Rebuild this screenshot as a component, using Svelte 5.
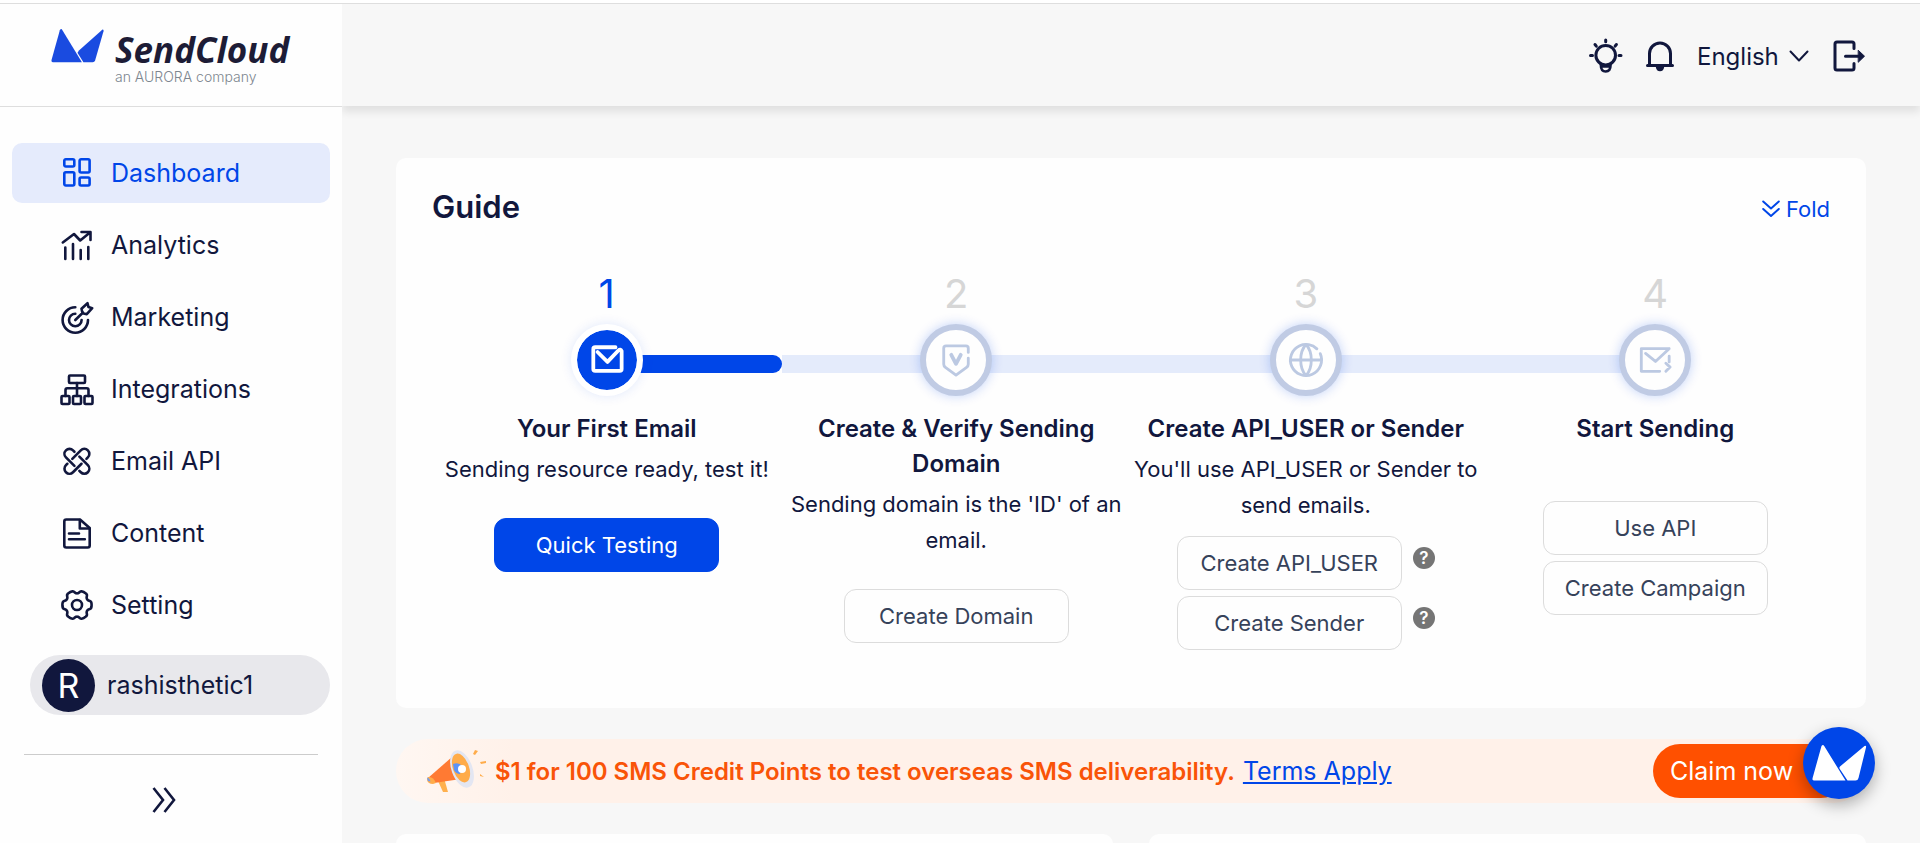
<script>
  const menu = [
    { name: "Dashboard", icon: "dashboard" },
    { name: "Analytics", icon: "analytics" },
    { name: "Marketing", icon: "marketing" },
    { name: "Integrations", icon: "integrations" },
    { name: "Email API", icon: "api" },
    { name: "Content", icon: "content" },
    { name: "Setting", icon: "setting" },
  ];

  const steps = [
    {
      title: "Your First Email",
      text: "Sending resource ready, test it!",
      icon: "mail",
      actions: [{ label: "Quick Testing", primary: true }],
    },
    {
      title: "Create & Verify Sending Domain",
      text: "Sending domain is the 'ID' of an email.",
      icon: "shield",
      actions: [{ label: "Create Domain" }],
    },
    {
      title: "Create API_USER or Sender",
      text: "You'll use API_USER or Sender to send emails.",
      icon: "globe",
      actions: [
        { label: "Create API_USER", help: true },
        { label: "Create Sender", help: true },
      ],
    },
    {
      title: "Start Sending",
      text: "",
      icon: "send",
      actions: [{ label: "Use API" }, { label: "Create Campaign" }],
    },
  ];

  let active = $state("Dashboard");
  let folded = $state(false);

  // six soft teeth around the centre of a 32px box
  function gear() {
    const points = [];
    for (let i = 0; i < 120; i++) {
      const a = (i / 120) * Math.PI * 2;
      const wave = Math.tanh(2 * Math.cos(6 * a) + 0.8);
      const r = 13 + 1.6 * wave;
      points.push(
        `${(16 + r * Math.cos(a)).toFixed(2)} ${(16 + r * Math.sin(a)).toFixed(2)}`
      );
    }
    return `M${points.join("L")}Z`;
  }
</script>

<div class="page">
  <aside class="sidebar">
    <a class="logo" href="#home" aria-label="SendCloud">
      <svg class="mark" viewBox="0 0 54 36" aria-hidden="true">
        <path d="M11 1 31.5 34.5H2Q0 34.5.6 32L9 2Q10 0 11 1Z" />
        <path d="M52.5 1.2Q54 1 53.5 3L45 32.5Q44.4 34.5 42.5 34.5H33L27 25 28.500 22.500Z" />
      </svg>
      <span class="wordmark">
        <span class="brand">SendCloud</span>
        <span class="company">an AURORA company</span>
      </span>
    </a>

    <nav>
      {#each menu as item}
        <a
          href="#{item.icon}"
          class="item"
          class:active={active === item.name}
          onclick={() => (active = item.name)}
        >
          <svg class="icon" viewBox="0 0 32 32" aria-hidden="true">
            {#if item.icon === "dashboard"}
              <rect x="3.3" y="2.3" width="10" height="7.2" rx="1.5" />
              <rect x="18.6" y="2.3" width="10" height="13.2" rx="1.5" />
              <rect x="3.3" y="15.3" width="10" height="13.2" rx="1.5" />
              <rect x="18.6" y="20.5" width="10" height="8" rx="1.5" />
            {:else if item.icon === "analytics"}
              <path d="M1.8 13.500 13 5l6.200 6.500L29 3.500M20.500 3h9v8" />
              <path d="M4.300 18.500V30M12 15v15M19.700 21v9M27.300 18v12" />
            {:else if item.icon === "marketing"}
              <path d="M14.300 6.300A12.700 12.700 0 1 0 27 19" />
              <path d="M14.300 12.700A6.300 6.300 0 1 0 20.600 19" />
              <path d="M14.300 19 22 11.500M20.500 7.800l6-5.600 1 3.900 3.700 1.100-5.400 6-4.300-1Z" />
            {:else if item.icon === "integrations"}
              <rect x="8" y="2.5" width="16" height="7.5" rx="1" />
              <rect x="0.5" y="23" width="8" height="8" rx="1" />
              <rect x="12" y="23" width="8" height="8" rx="1" />
              <rect x="23.5" y="23" width="8" height="8" rx="1" />
              <path d="M16 10v13M4.500 23v-6q0-1.700 1.700-1.700h19.600q1.700 0 1.700 1.700v6" />
            {:else if item.icon === "api"}
              <g transform="translate(15.900 16.300)">
                {#each [-45, 45, 135, 225] as angle}
                  <path d="M-1.500-5H10.500a5 5 0 0 1 0 10H8.500" transform="rotate({angle})" />
                {/each}
              </g>
            {:else if item.icon === "content"}
              <path d="M5.300 2.500H19L28.700 11v17.500q0 2-2 2H5.300q-2 0-2-2v-24q0-2 2-2Z" />
              <path d="M18.800 3v8.500h9.700M8 16.500h10M8 22.300h15.800" />
            {:else}
              <path d={gear()} />
              <circle cx="16" cy="16" r="5" />
            {/if}
          </svg>
          {item.name}
        </a>
      {/each}
    </nav>

    <button class="user">
      <span class="avatar">R</span>
      rashisthetic1
    </button>

    <hr />

    <button class="collapse" aria-label="Expand menu">
      <svg viewBox="0 0 24 26" aria-hidden="true">
        <path d="M1.500 1 11 13 1.500 25M12.500 1 22 13 12.500 25" />
      </svg>
    </button>
  </aside>

  <div class="main">
    <header>
      <button class="tool bulb" aria-label="Tips">
        <svg viewBox="0 0 34 34" aria-hidden="true">
          <circle cx="16.7" cy="16.2" r="9.8" />
          <path d="M11.800 26q0 6.500 4.900 6.500t4.900-6.500M12 27.500h9.500" stroke-width="2.5" />
          <path d="M16.700 1v1.700M6 5.500l1.300 1.700M27.400 5.500l-1.300 1.700M1.500 16.500h2M30 16.500h2" />
        </svg>
      </button>
      <button class="tool bell" aria-label="Notifications">
        <svg viewBox="0 0 28 32" aria-hidden="true">
          <path d="M3.500 25V13.500a10.500 10.500 0 0 1 21 0V25M1.500 25.500h25" />
          <path d="M9.800 27h8.400q-.6 4.200-4.200 4.200T9.800 27Z" fill="currentColor" stroke="none" />
        </svg>
      </button>
      <label class="language">
        <select aria-label="Language">
          <option>English</option>
        </select>
        <svg viewBox="0 0 20 12" aria-hidden="true">
          <path d="M1.500 1.500 10 10.500l8.500-9" />
        </svg>
      </label>
      <button class="tool exit" aria-label="Log out">
        <svg viewBox="0 0 32 32" aria-hidden="true">
          <path d="M21 8.500V4q0-2-2-2H4Q2 2 2 4v24q0 2 2 2h15q2 0 2-2v-4.500" />
          <path d="M12.500 16.200H27" />
          <path d="M25.500 10.500l6 5.700-6 5.800Z" fill="currentColor" stroke-width="1" />
        </svg>
      </button>
    </header>

    <main>
      <section class="card guide">
        <div class="head">
          <h2>Guide</h2>
          <button class="fold" onclick={() => (folded = !folded)}>
            <svg viewBox="0 0 18 18" aria-hidden="true">
              <path d="M1.200 1.500 9 8.500l7.800-7M1.200 9 9 16l7.800-7" />
            </svg>
            Fold
          </button>
        </div>

        {#if !folded}
          <ol>
            {#each steps as step, index}
              <li class:current={index === 0}>
                <div class="number">{index + 1}</div>
                <div class="rail">
                  <span class="line"></span>
                  <span class="node">
                    <svg viewBox="0 0 36 36" aria-hidden="true">
                      {#if step.icon === "mail"}
                        <path d="M27 4.500H5.500q-2 0-2 2v21q0 2 2 2h26q2 0 2-2V8.500q-1.200-2.700-3.500-.5L18.500 20 8 9.500" />
                      {:else if step.icon === "shield"}
                        <path d="M31 10V5.500Q31 3 28.500 3H7.500Q5 3 5 5.500v17q0 2 1.800 3.300L18 34l11.200-8.200Q31 24.500 31 22.500V16" />
                        <path d="M13 12.500l5 9.500 5-9.500" stroke-width="4" />
                      {:else if step.icon === "globe"}
                        <circle
                          cx="18"
                          cy="18"
                          r="16.5"
                          pathLength="100"
                          stroke-dasharray="94 6"
                          transform="rotate(-24 18 18)"
                        />
                        <path d="M18 1.500c-7.500 8-7.500 25 0 33M18 1.500c7.500 8 7.500 25 0 33M1.500 18h33" />
                      {:else}
                        <path d="M33 6H3.500v24H23M8 11l10.500 8.500L33 6M33 14v6M29.500 21.500l4.500 4-4.500 4.500" />
                      {/if}
                    </svg>
                  </span>
                  <span class="line"></span>
                </div>
                <h3>{step.title}</h3>
                {#if step.text}
                  <p>{step.text}</p>
                {/if}
                <div
                  class="actions"
                  class:stacked={step.actions.length > 1}
                  class:alone={!step.text}
                >
                  {#each step.actions as action}
                    <div class="action">
                      <button class="btn" class:primary={action.primary}>{action.label}</button>
                      {#if action.help}
                        <button class="help" aria-label="Help: {action.label}">?</button>
                      {/if}
                    </div>
                  {/each}
                </div>
              </li>
            {/each}
          </ol>
        {/if}
      </section>

      <section class="banner">
        <svg class="horn" viewBox="0 0 60 44" aria-hidden="true">
          <path d="M12 32 17 43h5l-4-14Z" fill="#ffb04d" />
          <path d="M2 29 26 8l9 22-27 4Q2 34 2 29Z" fill="#ff7a33" />
          <path d="M2 28q5-1 8 6l-3 1q-5 0-6-4 0-2 1-3Z" fill="#ffac4a" />
          <path d="M1 28.500q2.500.5 3.500 4L2 32Z" fill="#6b9cf5" />
          <ellipse cx="36" cy="20" rx="10.5" ry="19.5" transform="rotate(-20 36 20)" fill="#e3e6f2" />
          <ellipse cx="35" cy="19" rx="8" ry="15" transform="rotate(-20 35 19)" fill="#ffac4a" />
          <path d="M27 15q6-2 9 2l-2 8q-4 0-6-4Z" fill="#5b93f8" />
          <circle cx="36" cy="20" r="4" fill="#fff" />
          <path d="M49 1l3 1-3 4-2-1ZM54 13l6-1v2l-5 1ZM54 25l4 3-4-1Z" fill="#ffac4a" />
        </svg>
        <strong>$1 for 100 SMS Credit Points to test overseas SMS deliverability.</strong>
        <a href="#terms">Terms Apply</a>
        <button class="claim">Claim now</button>
      </section>

      <div class="columns">
        <section class="card"></section>
        <section class="card"></section>
      </div>
    </main>
  </div>

  <button class="chat" aria-label="Chat with us">
    <svg viewBox="0 0 56 38" aria-hidden="true">
      <path d="M10.500 2Q12 0 13.200 2L34.500 36.500H3Q1 36.500 1.600 34Z" />
      <path d="M53.500 2q2.200-.8 1.500 1.500L47.500 34q-.6 2.500-3 2.500h-8L28.500 24.500Q28 23.500 29 22.500Z" />
    </svg>
  </button>
</div>

<style>
  :global(body) {
    margin: 0;
    background: #f7f7f7;
  }
  .page {
    --ink: #11173d;
    --blue: #0046e8;
    display: flex;
    box-sizing: border-box;
    height: 100vh;
    overflow: hidden;
    border-top: 3px solid #ffffff;
    font-family: Inter, "Open Sans", sans-serif;
    font-size: 25px;
    color: var(--ink);
  }
  .page * {
    box-sizing: border-box;
  }
  button,
  select {
    font: inherit;
    color: inherit;
    background: none;
    border: 0;
    padding: 0;
    margin: 0;
    cursor: pointer;
  }
  svg {
    display: block;
    flex-shrink: 0;
    fill: none;
    stroke: currentColor;
    stroke-linecap: round;
    stroke-linejoin: round;
    overflow: visible;
  }

  /* sidebar */
  .sidebar {
    position: relative;
    z-index: 2;
    display: flex;
    flex-direction: column;
    flex: 0 0 342px;
    background: #fefefe;
    border-top: 1px solid #dedede;
  }
  .logo {
    display: flex;
    gap: 11px;
    height: 103px;
    padding: 24px 0 0 51px;
    border-bottom: 1px solid #dedede;
    color: #1d1c36;
    text-decoration: none;
  }
  .mark {
    width: 53px;
    height: 36px;
    fill: #1a4be0;
    stroke: none;
  }
  .wordmark {
    display: flex;
    flex-direction: column;
    padding-top: 2px;
  }
  .brand {
    font-family: "Open Sans", sans-serif;
    font-size: 35px;
    line-height: 40px;
    font-weight: 700;
    font-style: italic;
  }
  .company {
    font-size: 14px;
    line-height: 14px;
    font-weight: 300;
    color: #7d868f;
  }
  nav {
    display: flex;
    flex-direction: column;
    gap: 12px;
    padding: 36px 12px 0;
  }
  .item {
    display: flex;
    align-items: center;
    gap: 18px;
    height: 60px;
    padding-left: 49px;
    border-radius: 10px;
    color: inherit;
    text-decoration: none;
  }
  .item.active {
    background: #e5ebfc;
    color: var(--blue);
  }
  .icon {
    width: 32px;
    height: 32px;
    stroke-width: 2.6;
  }
  .user {
    display: flex;
    align-items: center;
    gap: 12px;
    height: 60px;
    margin: 20px 12px 0 30px;
    padding-left: 12px;
    border-radius: 30px;
    background: #e8e8ec;
  }
  .avatar {
    display: grid;
    place-items: center;
    width: 53px;
    height: 53px;
    border-radius: 50%;
    background: var(--ink);
    color: #ffffff;
    font-size: 34px;
  }
  hr {
    width: 294px;
    margin: 39px 24px 0;
    border: 0;
    border-top: 1px solid #cccccc;
  }
  .collapse {
    align-self: flex-start;
    margin: 32px 0 0 152px;
  }
  .collapse svg {
    width: 24px;
    height: 26px;
    stroke-width: 2.6;
    stroke-linecap: butt;
    stroke-linejoin: miter;
  }

  /* top bar */
  .main {
    flex: 1;
    min-width: 0;
  }
  header {
    position: relative;
    z-index: 1;
    display: flex;
    align-items: center;
    justify-content: flex-end;
    height: 103px;
    padding: 2px 55px 0 0;
    border-top: 1px solid #dedede;
    background: #f7f7f7;
    box-shadow: 0 6px 8px rgba(0, 0, 0, 0.09);
  }
  .tool svg {
    stroke-width: 3;
  }
  .bulb svg {
    width: 34px;
    height: 34px;
  }
  .bell svg {
    width: 28px;
    height: 32px;
  }
  .bell {
    margin-left: 23px;
  }
  .exit {
    margin-left: 24px;
  }
  .exit svg {
    width: 32px;
    height: 32px;
  }
  .language {
    display: flex;
    align-items: center;
    gap: 10px;
    margin-left: 23px;
  }
  select {
    appearance: none;
    font-size: 24px;
  }
  .language svg {
    width: 20px;
    height: 12px;
    stroke-width: 2;
    pointer-events: none;
  }

  /* content */
  main {
    padding: 52px 54px 0;
  }
  .card {
    border-radius: 10px;
    background: #fefefe;
  }
  .guide {
    min-height: 550px;
    padding: 30px 36px 0;
  }
  .head {
    display: flex;
    align-items: center;
    justify-content: space-between;
    height: 42px;
  }
  h2,
  h3,
  p {
    margin: 0;
  }
  h2 {
    font-size: 31px;
    line-height: 38px;
    font-weight: 600;
    padding-bottom: 4px;
  }
  .fold {
    display: flex;
    align-items: center;
    gap: 6px;
    font-size: 22px;
    color: var(--blue);
  }
  .fold svg {
    width: 18px;
    height: 18px;
    stroke-width: 2;
  }
  ol {
    display: grid;
    grid-template-columns: repeat(4, 1fr);
    margin: 36px 0 0;
    padding: 0;
    list-style: none;
  }
  li {
    display: flex;
    flex-direction: column;
    align-items: center;
    text-align: center;
  }
  .number {
    font-size: 40px;
    line-height: 56px;
    color: #d6d6d6;
  }
  .rail {
    display: flex;
    align-items: center;
    align-self: stretch;
    margin-top: 2px;
  }
  .line {
    flex: 1;
    height: 18px;
    margin-top: 8px;
    background: #e4ebfb;
  }
  li:first-child .line:first-child,
  li:last-child .line:last-child {
    background: none;
  }
  .node {
    position: relative;
    z-index: 1;
    display: grid;
    place-items: center;
    width: 72px;
    height: 72px;
    margin: 0 -4px;
    border: 6px solid #c0cbe4;
    border-radius: 50%;
    background: #fefefe;
    color: #bcc9e2;
    box-shadow: 0 0 12px rgba(0, 70, 232, 0.24);
  }
  .node svg {
    width: 34px;
    height: 34px;
    stroke-width: 3;
  }
  .current .number {
    color: var(--blue);
  }
  .current .node {
    border-color: #ffffff;
    background: var(--blue) padding-box;
    color: #ffffff;
    box-shadow: 0 0 12px rgba(0, 70, 232, 0.12);
  }
  .current .node svg {
    stroke-width: 4;
  }
  .current .line:last-child {
    background: var(--blue);
    border-radius: 0 9px 9px 0;
  }
  h3 {
    max-width: 346px;
    margin-top: 15px;
    font-size: 24px;
    line-height: 35px;
    font-weight: 600;
  }
  p {
    max-width: 346px;
    margin-top: 5px;
    font-size: 22px;
    line-height: 36px;
  }
  .actions {
    display: flex;
    flex-direction: column;
    gap: 6px;
    margin-top: 31px;
  }
  .actions.stacked {
    margin-top: 13px;
  }
  .actions.alone {
    margin-top: 55px;
  }
  .action {
    display: flex;
    gap: 11px;
  }
  .btn {
    width: 225px;
    height: 54px;
    border: 1px solid #dcdcdc;
    border-radius: 12px;
    font-size: 22px;
    color: #36425a;
  }
  .btn.primary {
    border-color: var(--blue);
    background: var(--blue);
    color: #ffffff;
  }
  .help {
    width: 22px;
    height: 22px;
    margin-top: 11px;
    border-radius: 50%;
    background: #757575;
    color: #ffffff;
    font-size: 17px;
    line-height: 22px;
    font-weight: 600;
  }

  .banner {
    display: flex;
    align-items: center;
    height: 64px;
    margin-top: 31px;
    padding: 0 18px 0 30px;
    border-radius: 32px;
    background: linear-gradient(90deg, #fff7f2 0%, #fff1e9 8%);
  }
  .horn {
    width: 60px;
    height: 44px;
    stroke: none;
  }
  .banner strong {
    margin-left: 9px;
    font-size: 24px;
    font-weight: 600;
    color: #f95408;
  }
  .banner a {
    margin-left: 8px;
    color: var(--blue);
  }
  .claim {
    width: 195px;
    height: 54px;
    margin-left: auto;
    padding-left: 17px;
    border-radius: 27px;
    background: #ff5000;
    color: #ffffff;
    text-align: left;
  }
  .columns {
    display: grid;
    grid-template-columns: 1fr 1fr;
    gap: 36px;
    margin-top: 31px;
  }
  .columns .card {
    min-height: 300px;
  }

  .chat {
    position: fixed;
    z-index: 3;
    right: 45px;
    bottom: 44px;
    display: grid;
    place-items: center;
    width: 72px;
    height: 72px;
    border-radius: 50%;
    background: var(--blue);
    box-shadow: 0 6px 16px rgba(0, 0, 0, 0.3);
  }
  .chat svg {
    width: 56px;
    height: 38px;
    fill: #ffffff;
    stroke: none;
  }
</style>
